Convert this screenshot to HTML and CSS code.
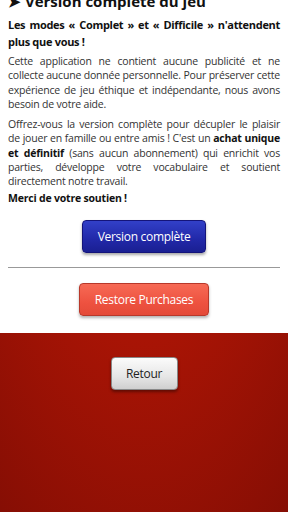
FILE: index.html
```html
<!DOCTYPE html>
<html lang="fr">
<head>
  <meta charset="UTF-8">
  <meta name="viewport" content="width=device-width, initial-scale=1.0">
  <title>Version complète</title>
  <link rel="stylesheet" href="styles.css">
</head>
<body>

  <div class="panel">
    <h1 class="title">&#x27A4; Version complète du jeu</h1>
    <p class="lead">Les modes « Complet » et « Difficile » n'attendent plus que vous !</p>
    <p class="intro">Cette application ne contient aucune publicité et ne collecte aucune donnée personnelle. Pour préserver cette expérience de jeu éthique et indépendante, nous avons besoin de votre aide.</p>
    <p class="offer">Offrez-vous la version complète pour décupler le plaisir de jouer en famille ou entre amis ! C'est un <b>achat unique et définitif</b> (sans aucun abonnement) qui enrichit vos parties, développe votre vocabulaire et soutient directement notre travail.</p>
    <p class="thanks">Merci de votre soutien !</p>

    <div class="actions">
      <button class="btn btn-blue">Version complète</button>
    </div>
    <hr class="sep">
    <div class="actions">
      <button class="btn btn-orange">Restore Purchases</button>
    </div>
  </div>

  <div class="footer">
    <button class="btn btn-grey">Retour</button>
  </div>

</body>
</html>
```

FILE: styles.css
```css
/* Basic Styles */
html, body {
  height: 100%;
}

body {
  display: flex;
  flex-direction: column;
  margin: 0;
  font-family: "Open Sans", sans-serif;
  color: #222;
  background: radial-gradient(ellipse 90% 120% at 50% 0%, #c41c08 0%, #a81405 55%, #860e04 100%);
}

.panel {
  background-color: #fff;
  padding: 0 8px;
  height: 333px;
  box-sizing: border-box;
  overflow: hidden;
}

.title {
  margin: -9px 0 0;
  font-size: 15px;
  font-weight: bold;
  line-height: 20px;
  color: #111;
}

.panel p {
  margin: 0;
  font-size: 10.5px;
  line-height: 14.3px;
  letter-spacing: -0.2px;
  text-align: justify;
  color: #333;
}

.panel p.lead {
  margin: 5px 0 4px;
  font-size: 11px;
  font-weight: bold;
  letter-spacing: -0.3px;
  line-height: 17px;
  color: #111;
}

.panel p.offer {
  margin-top: 6px;
}

.panel p.thanks {
  margin-top: 2px;
  font-size: 10.5px;
  font-weight: bold;
  color: #111;
}

.panel p b {
  color: #111;
}

.actions {
  display: flex;
  justify-content: center;
}

.btn {
  font-family: "Open Sans", sans-serif;
  font-size: 12px;
  letter-spacing: -0.3px;
  height: 33px;
  padding: 0;
  border-radius: 4px;
  cursor: pointer;
}

.btn-blue {
  margin-top: 15px;
  width: 124px;
  color: #fff;
  border: 1px solid #14147a;
  background: linear-gradient(#3240c8, #2128a8 60%, #1a1f92);
  box-shadow: 0 2px 3px rgba(0, 0, 0, 0.35);
}

.btn-orange {
  width: 130px;
  color: #fff;
  border: 1px solid #b8382a;
  background: linear-gradient(#f66a55, #ee5240 60%, #e44a38);
  box-shadow: 0 2px 3px rgba(0, 0, 0, 0.3);
}

.sep {
  margin: 14px 0 15px;
  border: none;
  border-top: 1px solid #999;
}

.footer {
  display: flex;
  justify-content: center;
  padding-top: 24px;
}

.btn-grey {
  width: 67px;
  color: #222;
  border: 1px solid #888;
  background: linear-gradient(#fbfbfb, #e6e6e6 60%, #cfcfcf);
  box-shadow: 0 2px 3px rgba(0, 0, 0, 0.4);
}
```
